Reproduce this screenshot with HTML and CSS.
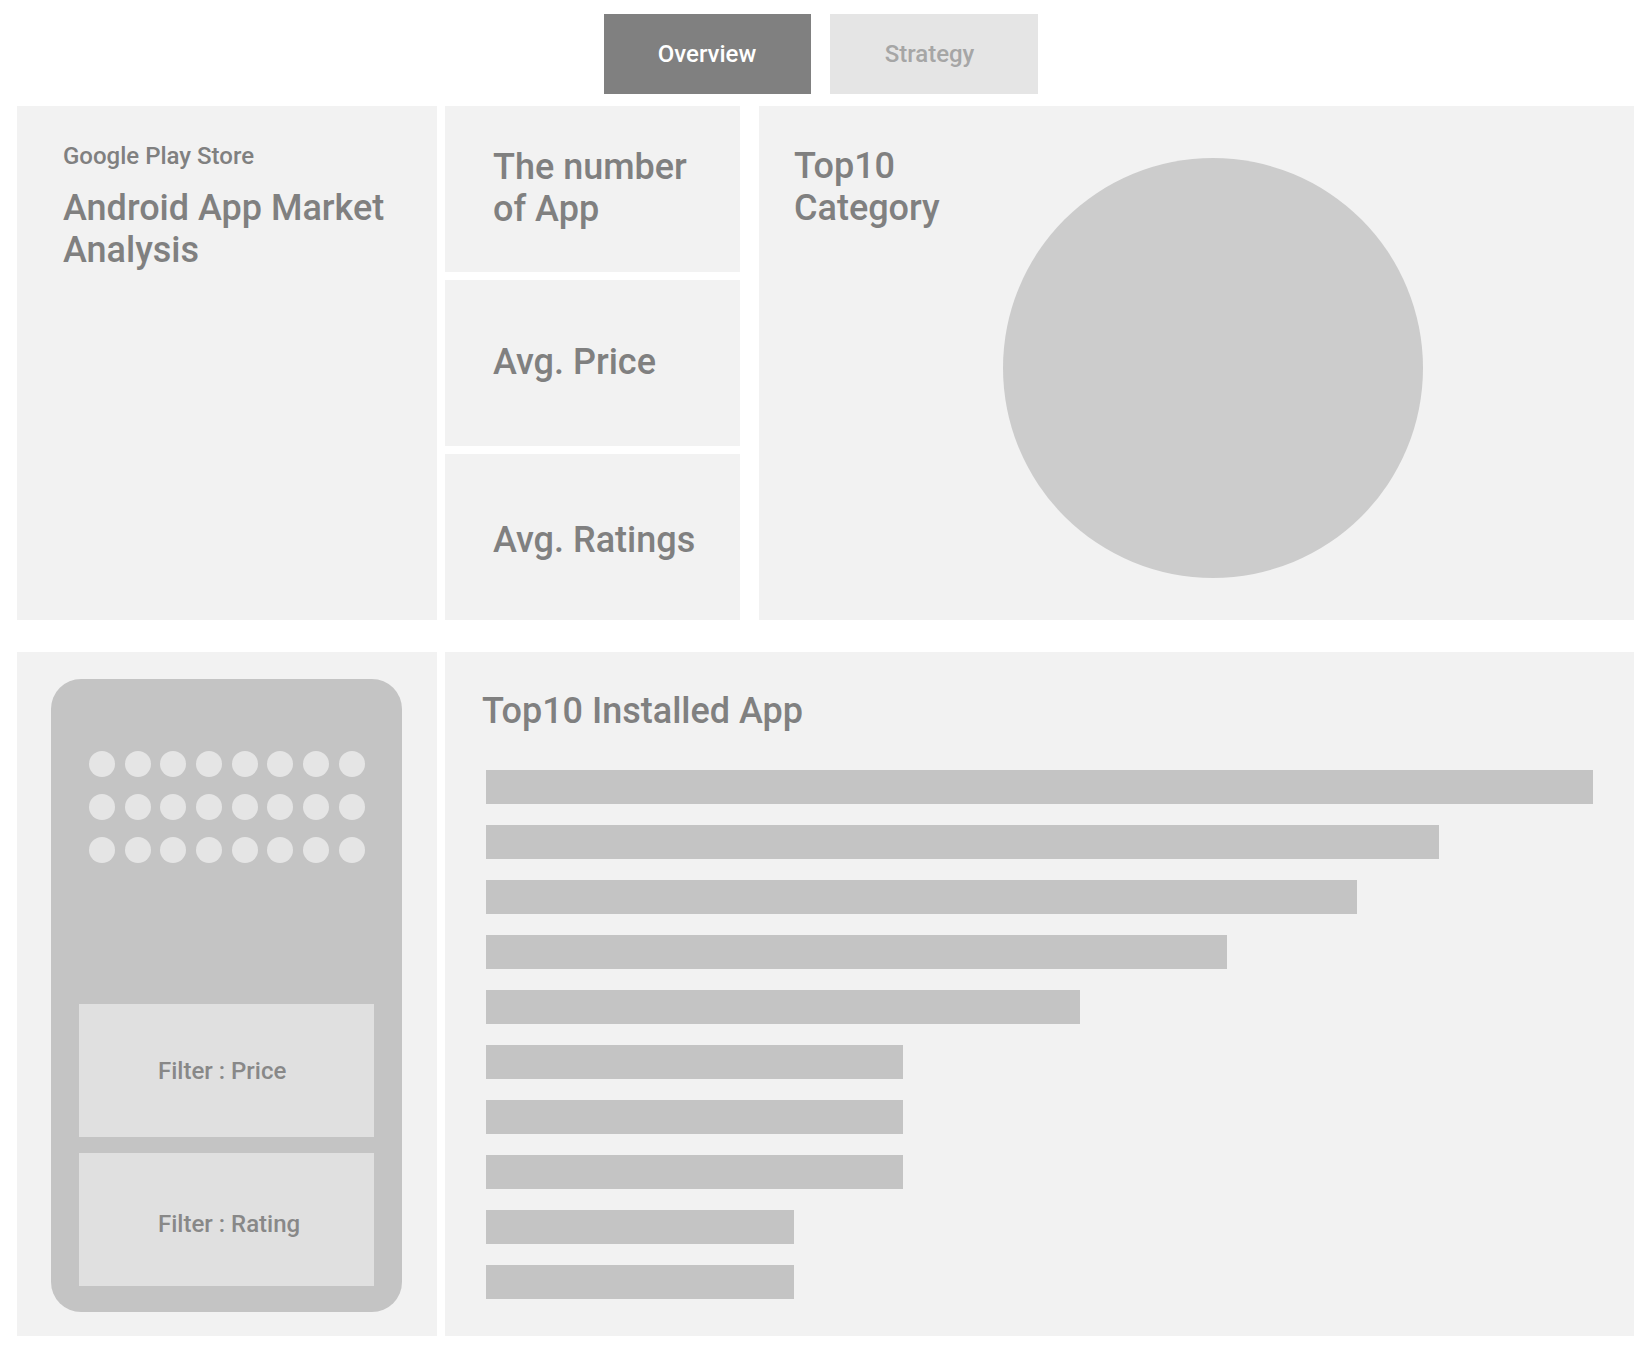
FILE: index.html
```html
<!DOCTYPE html>
<html lang="en">
<head>
<meta charset="utf-8">
<title>Android App Market Analysis</title>
<link rel="stylesheet" href="styles.css">
</head>
<body>
<nav class="tabs">
  <div class="tab tab-active">Overview</div>
  <div class="tab tab-idle">Strategy</div>
</nav>
<main class="dashboard">
  <section class="row row-top">
    <div class="panel panel-intro">
      <div class="eyebrow">Google Play Store</div>
      <h1 class="title">Android App Market Analysis</h1>
    </div>
    <div class="kpis">
      <div class="panel kpi"><div class="title">The number<br>of App</div></div>
      <div class="panel kpi"><div class="title">Avg. Price</div></div>
      <div class="panel kpi kpi-low"><div class="title">Avg. Ratings</div></div>
    </div>
    <div class="panel panel-category">
      <div class="title category-title">Top10<br>Category</div>
      <div class="pie"></div>
    </div>
  </section>
  <section class="row row-bottom">
    <div class="panel panel-filters">
      <div class="device">
        <div class="dots">
          <span class="dot"></span><span class="dot"></span><span class="dot"></span><span class="dot"></span><span class="dot"></span><span class="dot"></span><span class="dot"></span><span class="dot"></span>
          <span class="dot"></span><span class="dot"></span><span class="dot"></span><span class="dot"></span><span class="dot"></span><span class="dot"></span><span class="dot"></span><span class="dot"></span>
          <span class="dot"></span><span class="dot"></span><span class="dot"></span><span class="dot"></span><span class="dot"></span><span class="dot"></span><span class="dot"></span><span class="dot"></span>
        </div>
        <div class="filters">
          <div class="filter">Filter : Price</div>
          <div class="filter filter-low">Filter : Rating</div>
        </div>
      </div>
    </div>
    <div class="panel panel-installed">
      <div class="title installed-title">Top10 Installed App</div>
      <div class="bars">
        <div class="bar" style="width:100%"></div>
        <div class="bar" style="width:86.1%"></div>
        <div class="bar" style="width:78.7%"></div>
        <div class="bar" style="width:66.9%"></div>
        <div class="bar" style="width:53.7%"></div>
        <div class="bar" style="width:37.7%"></div>
        <div class="bar" style="width:37.7%"></div>
        <div class="bar" style="width:37.7%"></div>
        <div class="bar" style="width:27.8%"></div>
        <div class="bar" style="width:27.8%"></div>
      </div>
    </div>
  </section>
</main>
</body>
</html>
```

FILE: styles.css
```css
* { box-sizing: border-box; }

html, body {
  margin: 0;
  padding: 0;
  background: #ffffff;
}

body {
  font-family: Roboto, "Noto Sans", "Liberation Sans", sans-serif;
  color: #808080;
  width: 1652px;
}

.tabs {
  display: flex;
  justify-content: center;
  gap: 19px;
  padding: 14px 11px 0 0;
}

.tab {
  width: 207px;
  height: 80px;
  display: flex;
  align-items: center;
  justify-content: center;
  font-size: 24px;
  font-weight: 500;
}

.tab-active {
  background: #808080;
  color: #ffffff;
}

.tab-idle {
  background: #e5e5e5;
  color: #a6a6a6;
  width: 208px;
  padding-right: 8px;
}

.dashboard {
  margin: 12px 18px 0 17px;
  display: flex;
  flex-direction: column;
  gap: 32px;
}

.row {
  display: grid;
  column-gap: 8px;
}

.row-top {
  grid-template-columns: 420px 295px 1fr;
  height: 514px;
}

.row-bottom {
  grid-template-columns: 420px 1fr;
  height: 684px;
}

.panel {
  background: #f2f2f2;
}

.title {
  margin: 0;
  font-size: 36px;
  line-height: 42px;
  font-weight: 500;
  color: #808080;
}

.panel-intro {
  padding: 36px 20px 0 46px;
}

.eyebrow {
  font-size: 24px;
  font-weight: 500;
  line-height: 28px;
  color: #808080;
}

.panel-intro .title {
  margin-top: 17px;
}

.kpis {
  display: grid;
  grid-template-rows: repeat(3, 1fr);
  gap: 8px;
}

.kpi {
  display: flex;
  align-items: center;
  padding-left: 48px;
}

.kpi .title {
  margin-bottom: 3px;
}

.kpi-low .title {
  margin: 5px 0 0;
}

.panel-category {
  margin-left: 11px;
  display: flex;
  align-items: flex-start;
  padding: 39px 0 0 35px;
}

.category-title {
  flex: 0 0 209px;
}

.pie {
  flex: 0 0 420px;
  width: 420px;
  height: 420px;
  margin-top: 13px;
  border-radius: 50%;
  background: #cccccc;
}

.panel-filters {
  padding: 27px 35px 24px 34px;
}

.device {
  height: 100%;
  background: #c4c4c4;
  border-radius: 30px;
  padding: 72px 28px 26px;
  display: flex;
  flex-direction: column;
}

.dots {
  display: grid;
  grid-template-columns: repeat(8, 26px);
  column-gap: 9.7px;
  row-gap: 17px;
  margin-left: 10px;
}

.dot {
  width: 26px;
  height: 26px;
  border-radius: 50%;
  background: #e5e5e5;
}

.filters {
  margin-top: auto;
  display: flex;
  flex-direction: column;
  gap: 16px;
}

.filter {
  height: 133px;
  background: #e0e0e0;
  display: flex;
  align-items: center;
  padding-left: 79px;
  font-size: 24px;
  font-weight: 500;
  color: #888888;
}

.filter-low {
  padding-top: 8px;
}

.panel-installed {
  padding: 38px 41px 0 41px;
}

.installed-title {
  margin-left: -4px;
  margin-bottom: 38px;
}

.bars {
  display: flex;
  flex-direction: column;
  gap: 21px;
}

.bar {
  height: 34px;
  background: #c4c4c4;
}
```
